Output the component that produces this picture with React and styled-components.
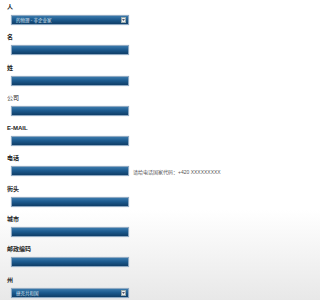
import styled, { createGlobalStyle } from "styled-components"

const Global = createGlobalStyle`
    html, body {
        margin : 0;
        padding : 0;
        overflow : hidden;
    }
    body {
        width : 232px;
        height : 300px;
        background : linear-gradient(#ffffff 0%, #ffffff 70%, #e8e8e8 100%);
        font-family : "Liberation Sans", "Noto Sans CJK SC", sans-serif;
    }
`

const Form = styled.form`
    padding : 2px 0 0 7px;
    width : 100%;
    box-sizing : border-box;
`

const Row = styled.div`
    height : 30.3px;
`

const Label = styled.label`
    display : block;
    font-size : 6px;
    line-height : 10px;
    font-weight : ${(p) => (p.light ? 400 : 700)};
    color : #222;
    margin-bottom : 3px;
`

const Line = styled.div`
    display : flex;
    align-items : center;
    gap : 4px;
    padding-left : 4px;
`

const Field = styled.div`
    position : relative;
    flex : none;
    width : 118px;
    height : 10px;
    box-sizing : border-box;
    border : 1px solid #8fa9c2;
    background : linear-gradient(#3a78aa 0%, #1d5b8f 45%, #0f3e68 100%);
    box-shadow : 0 0 1px #b8c8d8;
    display : flex;
    align-items : center;
    padding-left : 4px;
    color : #dfe9f3;
    font-size : 4.5px;
    white-space : nowrap;
`

const Arrow = styled.span`
    position : absolute;
    right : 2px;
    top : 1px;
    width : 5px;
    height : 6px;
    background : #e8ecf0;
    border : 0.5px solid #9aa;
    box-sizing : border-box;
    display : flex;
    align-items : center;
    justify-content : center;
`

const Hint = styled.span`
    font-size : 5px;
    color : #555;
    white-space : nowrap;
`

const fields = [
    { label : "人", select : "的物理 - 非企业家" },
    { label : "名" },
    { label : "姓" },
    { label : "公司", light : true },
    { label : "E-MAIL" },
    { label : "电话", hint : "请给电话国家代码：+420 XXXXXXXXX" },
    { label : "街头" },
    { label : "城市" },
    { label : "邮政编码" },
    { label : "州", select : "捷克共和国" },
]

export default function App() {
    return (
        <>
            <Global />
            <Form>
                {fields.map((f) => (
                    <Row key={f.label}>
                        <Label light={f.light}>{f.label}</Label>
                        <Line>
                            <Field>
                                {f.select}
                                {f.select && (
                                    <Arrow>
                                        <svg width="3" height="2" viewBox="0 0 3 2">
                                            <path d="M0 0 L1.5 2 L3 0 Z" fill="#556" />
                                        </svg>
                                    </Arrow>
                                )}
                            </Field>
                            {f.hint && <Hint>{f.hint}</Hint>}
                        </Line>
                    </Row>
                ))}
            </Form>
        </>
    )
}
